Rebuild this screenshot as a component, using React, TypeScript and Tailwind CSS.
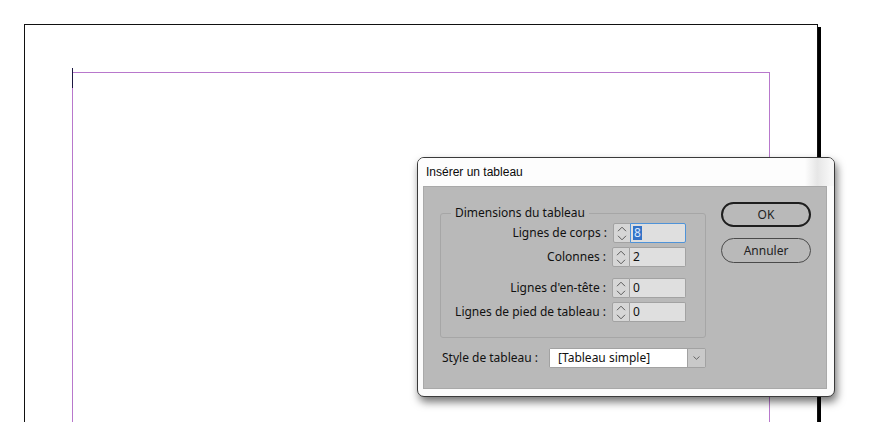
import React from "react";

function Chevrons() {
  return (
    <div className="w-[18px] h-full border border-[#a2a2a2] rounded-l-[2px] bg-[#d6d6d6] flex flex-col items-center justify-center gap-[3px]">
      <svg width="10" height="6" viewBox="0 0 10 6">
        <path d="M1 5.2 L5 1.2 L9 5.2" stroke="#5a5a5a" strokeWidth="1" fill="none" />
      </svg>
      <svg width="10" height="6" viewBox="0 0 10 6">
        <path d="M1 0.8 L5 4.8 L9 0.8" stroke="#5a5a5a" strokeWidth="1" fill="none" />
      </svg>
    </div>
  );
}

function Spin({ value, focused }: { value: string; focused?: boolean }) {
  return (
    <div className="flex h-[20px]">
      <Chevrons />
      {focused ? (
        <div className="w-[56px] h-full border border-[#4f93d8] ml-[-1px] rounded-r-[2px] bg-[#dfdfdf] pl-[2px] flex items-center">
          <span className="bg-[#3373c7] text-[#d9e9ff] px-[1px] leading-[14px]">{value}</span>
        </div>
      ) : (
        <div className="w-[56px] h-full border-y border-r border-[#a2a2a2] rounded-r-[2px] bg-[#dfdfdf] pl-[3px] flex items-center">
          <span className="leading-[14px]">{value}</span>
        </div>
      )}
    </div>
  );
}

function Row({ label, value, focused }: { label: string; value: string; focused?: boolean }) {
  return (
    <div className="flex items-center justify-end pr-[19px] h-[20px]">
      <span className="mr-[6px] whitespace-nowrap">{label}</span>
      <Spin value={value} focused={focused} />
    </div>
  );
}

export default function App() {
  return (
    <div className="relative w-[871px] h-[422px] overflow-hidden bg-white font-['Noto_Sans',Arial,sans-serif] text-[12px] text-[#111]">
      <div className="pt-[24px] pl-[24px]">
        <div className="w-[794px] h-[420px] border border-[#111] shadow-[3px_3px_0_#000] bg-white">
          <div className="ml-[47px] mt-[47px] w-[698px] h-[400px] border border-[#b878cc]" />
        </div>
      </div>

      {/* text cursor */}
      <div className="absolute left-[72px] top-[68px] w-[1px] h-[20px] bg-[#1b1640]" />

      {/* dialog */}
      <div className="absolute left-[417px] top-[157px] w-[418px] h-[240px] rounded-[7px] border border-[#3a3a3a] bg-[#fbfbfb] shadow-[2px_5px_9px_rgba(0,0,0,0.55)] flex flex-col overflow-hidden">
        <div className="h-[28px] pl-[8px] flex items-center text-[#0a0a0a] font-['Liberation_Sans',Arial,sans-serif] bg-[linear-gradient(90deg,#fdfdfd_0%,#fdfdfd_93%,#e6e6e6_96%,#f6f6f6_99%)]">
          Insérer un tableau
        </div>
        <div className="ml-[5px] mr-[7px] h-[203px] bg-[#b9b9b9] border border-[#a9a9a9] flex">
          <div className="pl-[16px] pt-[26px] flex flex-col">
            <div className="relative w-[266px] h-[125px] border border-[#a6a6a6] rounded-[3px] pt-[9px] flex flex-col">
              <span className="absolute left-[10px] top-[-9px] px-[4px] bg-[#b9b9b9] leading-[16px]">
                Dimensions du tableau
              </span>
              <Row label="Lignes de corps :" value="8" focused />
              <div className="h-[4px]" />
              <Row label="Colonnes :" value="2" />
              <div className="h-[11px]" />
              <Row label="Lignes d'en-tête :" value="0" />
              <div className="h-[4px]" />
              <Row label="Lignes de pied de tableau :" value="0" />
            </div>
            <div className="mt-[10px] flex items-center pl-[2px] h-[20px]">
              <span className="whitespace-nowrap">Style de tableau :</span>
              <div className="ml-auto w-[157px] h-[20px] flex border border-[#a2a2a2] rounded-[2px]">
                <div className="flex-1 bg-white pl-[8px] flex items-center">[Tableau simple]</div>
                <div className="w-[18px] border-l border-[#a2a2a2] bg-[#c9c9c9] flex items-center justify-center">
                  <svg width="7" height="4" viewBox="0 0 7 4">
                    <path d="M0.5 0.5 L3.5 3.3 L6.5 0.5" stroke="#666" strokeWidth="1" fill="none" />
                  </svg>
                </div>
              </div>
            </div>
          </div>
          <div className="ml-[15px] pt-[15px] flex flex-col gap-[11px]">
            <div className="w-[90px] h-[25px] rounded-full border-2 border-[#1e1e1e] flex items-center justify-center text-[#222]">
              OK
            </div>
            <div className="w-[90px] h-[25px] rounded-full border border-[#4a4a4a] flex items-center justify-center text-[#222]">
              Annuler
            </div>
          </div>
        </div>
      </div>
    </div>
  );
}
